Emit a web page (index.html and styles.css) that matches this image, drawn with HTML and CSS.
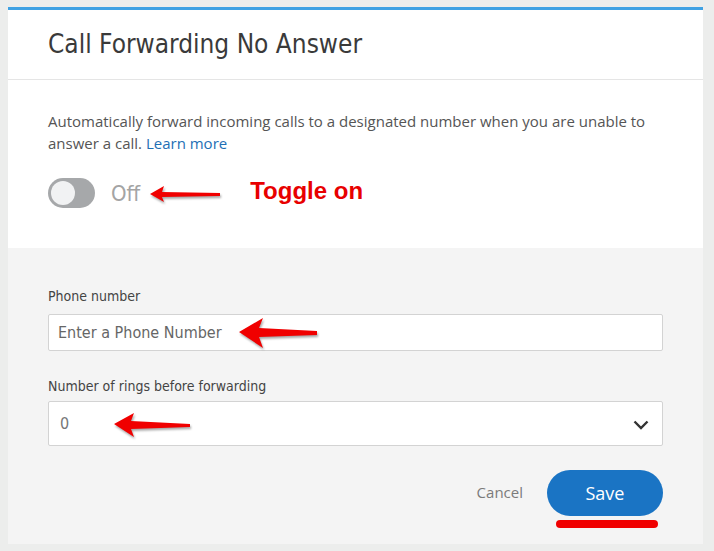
FILE: index.html
```html
<!DOCTYPE html>
<html>
<head>
<meta charset="utf-8">
<link rel="stylesheet" href="styles.css">
</head>
<body>
<div class="card">
  <div class="header"><h1 class="title">Call Forwarding No Answer</h1></div>
  <div class="intro">
    <p class="desc">Automatically forward incoming calls to a designated number when you are unable to answer a call. <a class="link">Learn more</a></p>
    <div class="toggle-row">
      <span class="toggle"><span class="knob"></span></span>
      <span class="off">Off</span>
      <svg class="arrow arrow-small" width="74" height="20" viewBox="0 0 74 20"><polygon points="2,10 16,2 14,8 72,9 72,12 14,13 16,18" fill="#f00000"/></svg>
      <span class="note">Toggle on</span>
    </div>
  </div>
  <div class="form">
    <label class="label">Phone number</label>
    <div class="field">
      <span class="placeholder">Enter a Phone Number</span>
      <svg class="arrow arrow-big" width="82" height="34" viewBox="0 0 82 34"><polygon points="2,16 26,2 22,12 80,15 80,19 22,21 26,32" fill="#f00000"/></svg>
    </div>
    <label class="label label-rings">Number of rings before forwarding</label>
    <div class="field select">
      <span class="value">0</span>
      <svg class="arrow arrow-mid" width="80" height="28" viewBox="0 0 80 28"><polygon points="2,13 22,2 19,10 78,13 78,16 19,18 22,26" fill="#f00000"/></svg>
      <svg class="chev" width="16" height="10" viewBox="0 0 16 10"><polyline points="1.5,1.5 8,8 14.5,1.5" fill="none" stroke="#333" stroke-width="2.4"/></svg>
    </div>
    <div class="actions">
      <span class="cancel">Cancel</span>
      <div class="save-wrap">
        <button class="save">Save</button>
        <span class="underline"></span>
      </div>
    </div>
  </div>
</div>
</body>
</html>
```
FILE: styles.css
```css
html, body { margin: 0; padding: 0; }
body {
  background: #ecedec;
  padding: 7px 11px 7px 8px;
  font-family: "Open Sans", "Liberation Sans", sans-serif;
}
.card {
  background: #fff;
  border-top: 3px solid #3fa1e3;
}
.header {
  height: 69px;
  border-bottom: 1px solid #e5e5e5;
  display: flex;
  align-items: center;
  padding-left: 40px;
}
.title {
  margin: 0;
  font-family: "Liberation Sans Narrow", "DejaVu Sans Condensed", "Roboto", sans-serif;
  font-weight: normal;
  font-size: 26px;
  color: #3a3a3a;
  padding-bottom: 2px;
}
.intro {
  height: 168px;
  box-sizing: border-box;
  padding: 30px 40px 0 40px;
}
.desc {
  margin: 0;
  font-size: 15px;
  line-height: 22px;
  color: #555;
  width: 610px;
}
.link { color: #1e6fb5; }
.toggle-row {
  display: flex;
  align-items: center;
  margin-top: 24px;
  height: 30px;
}
.toggle {
  width: 47px;
  height: 30px;
  border-radius: 15px;
  background: #a6a8aa;
  display: flex;
  align-items: center;
  padding-left: 3px;
  box-sizing: border-box;
}
.knob {
  width: 24px; height: 24px;
  border-radius: 50%;
  background: #f1f2f3;
}
.off {
  margin-left: 16px;
  font-size: 22px;
  color: #a4a4a4;
  font-family: "Liberation Sans Narrow", "DejaVu Sans Condensed", sans-serif;
}
.arrow { filter: drop-shadow(1px 2px 1px rgba(0,0,0,0.35)); }
.arrow-small { margin-left: 8px; margin-top: 2px; }
.note {
  margin-left: 28px;
  font-family: "Liberation Sans", Arial, sans-serif;
  font-weight: bold;
  font-size: 24px;
  color: #e80000;
  margin-top: -4px;
}
.form {
  background: #f4f4f4;
  height: 296px;
  box-sizing: border-box;
  padding: 39px 40px 0 40px;
}
.label {
  display: block;
  font-family: "Liberation Sans Narrow", "DejaVu Sans Condensed", sans-serif;
  font-size: 14px;
  color: #444;
  height: 18px;
  line-height: 18px;
}
.label-rings { margin-top: 26px; }
.field {
  margin-top: 9px;
  height: 37px;
  box-sizing: border-box;
  background: #fff;
  border: 1px solid #d3d3d3;
  border-radius: 2px;
  display: flex;
  align-items: center;
  padding-left: 9px;
  position: relative;
}
.placeholder, .value {
  font-family: "Liberation Sans Narrow", "DejaVu Sans Condensed", sans-serif;
  font-size: 16px;
  color: #666;
}
.arrow-big { position: absolute; left: 188px; top: 1px; }
.select { height: 45px; margin-top: 6px; padding-left: 11px; }
.value { color: #777; }
.arrow-mid { position: absolute; left: 63px; top: 9px; }
.chev { position: absolute; right: 13px; top: 18px; }
.actions {
  display: flex;
  justify-content: flex-end;
  align-items: flex-start;
  margin-top: 24px;
}
.cancel {
  font-size: 15px;
  color: #7b7b7b;
  margin-top: 12px;
  margin-right: 24px;
}
.save-wrap {
  display: flex;
  flex-direction: column;
  align-items: center;
}
.save {
  width: 116px;
  height: 46px;
  border-radius: 23px;
  border: none;
  background: #1a74c4;
  color: #fff;
  font-family: "Open Sans", sans-serif;
  font-size: 18px;
  padding: 0;
}
.underline {
  margin-top: 4px;
  margin-left: 3px;
  width: 102px;
  height: 8px;
  border-radius: 4px;
  background: #f00000;
}
```
